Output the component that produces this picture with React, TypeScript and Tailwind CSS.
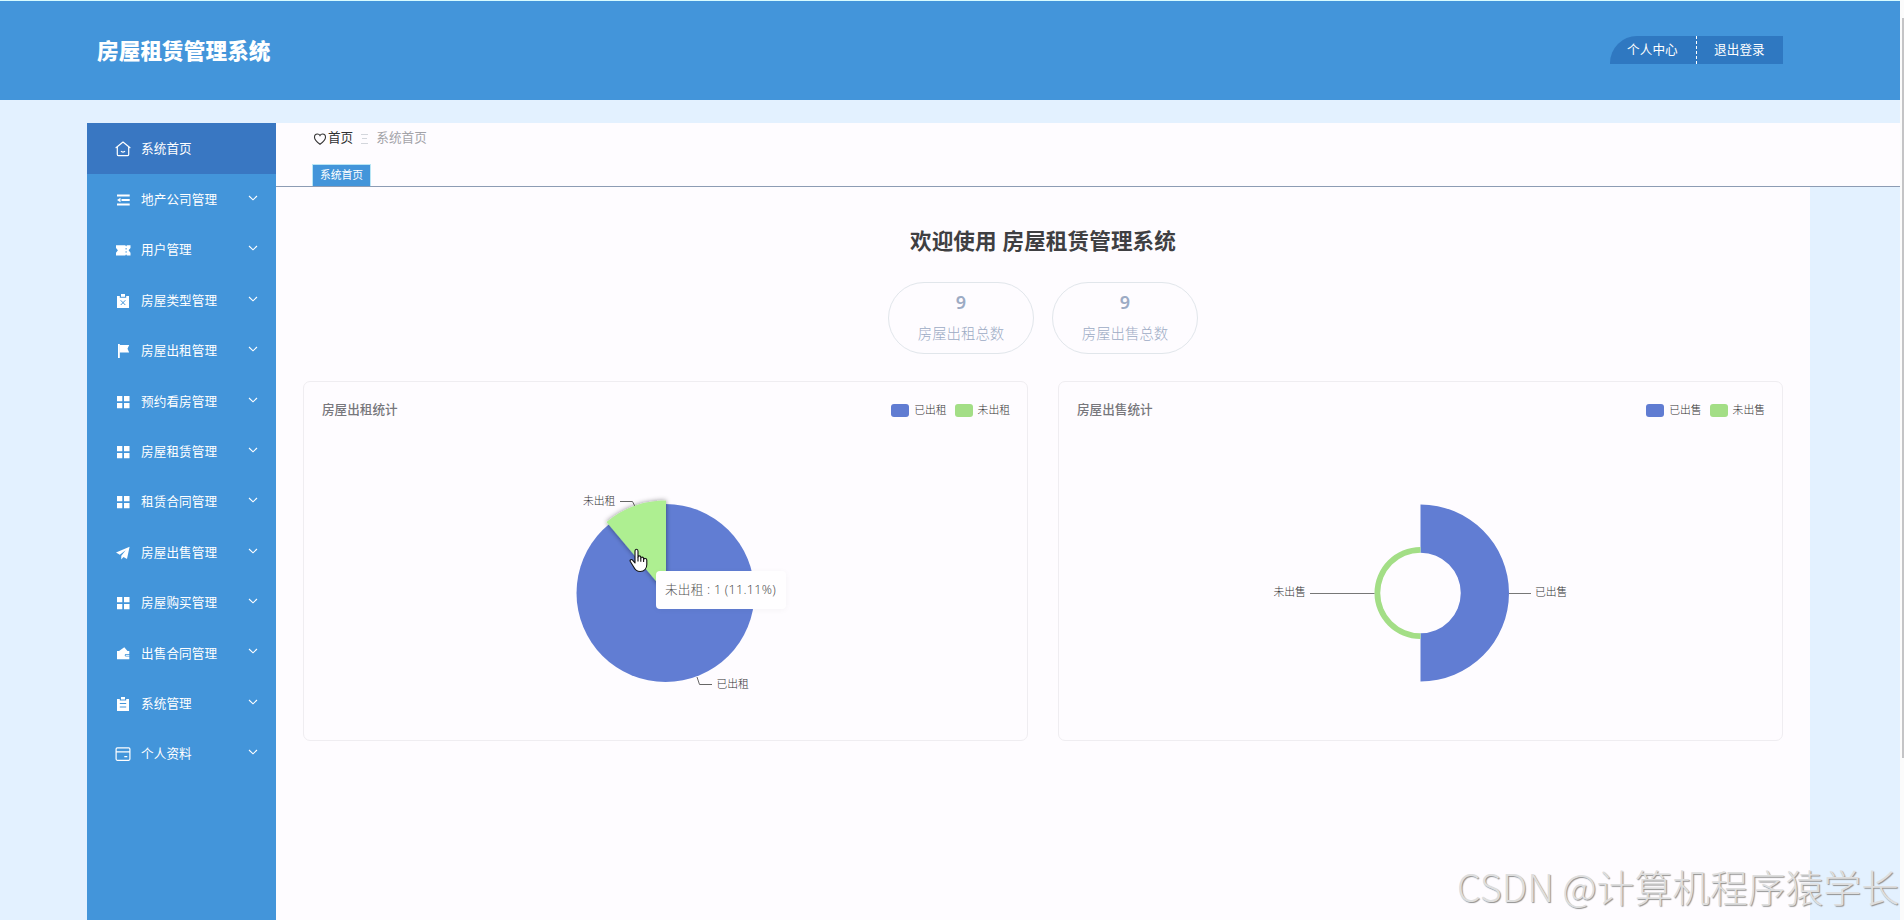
import React from "react";

type IconName =
  | "home" | "fold" | "ticket" | "claimX" | "flag" | "grid"
  | "plane" | "wallet" | "order" | "card";

function Icon({ name }: { name: IconName }) {
  const common = { width: 16, height: 16, viewBox: "0 0 16 16", className: "block shrink-0" };
  switch (name) {
    case "home":
      return (
        <svg {...common} fill="none" stroke="#fff" strokeWidth="1.2" strokeLinejoin="round">
          <path d="M1 6.7 8 1l7 5.7" strokeLinecap="round" />
          <path d="M2.3 6v7.6c0 .6.4 1 1 1h9.4c.6 0 1-.4 1-1V6" />
          <path d="M6 10.2c.9 1.1 3.1 1.1 4 0" />
        </svg>
      );
    case "fold":
      return (
        <svg {...common} fill="#fff">
          <path d="M2 2.500h12.700v2H2zM6.500 7h8.200v2H6.500zM2 11.500h12.700v2H2zM2 8l3.500-2.200v4.400z" />
        </svg>
      );
    case "ticket":
      return (
        <svg {...common} fill="#fff">
          <path d="M1 3.300h9.300l.8 1.300.8-1.300H15.500v2.800L13.600 8.300l1.900 2.400v2.800H11.900l-.8-1.300-.8 1.300H1v-2.800L2.900 8.300 1 6.100z" />
          <path d="M11.100 6v1.500M11.100 9.200v1.500" stroke="#4395da" strokeWidth="1" />
        </svg>
      );
    case "claimX":
      return (
        <svg {...common} fill="#fff">
          <path d="M2 3h2.8v1.800h6.4V3H14v12H2z" />
          <path d="M6 1h4v2.8H6z" />
          <path d="m5.7 7.3 4.6 4.7M10.3 7.3 5.7 12" stroke="#4395da" strokeWidth="1" />
        </svg>
      );
    case "flag":
      return (
        <svg {...common} fill="#fff">
          <path d="M3 1h1.8v14H3z" />
          <path d="M4.5 2h9.7l-1.7 3.8 1.7 3.7H4.5z" />
        </svg>
      );
    case "grid":
      return (
        <svg {...common} fill="#fff">
          <path d="M2 2h5.300v5.200H2zM9 2h5.500v5.200H9zM2 9h5.300v5.200H2zM9 9h5.500v5.200H9z" />
        </svg>
      );
    case "plane":
      return (
        <svg {...common} fill="#fff">
          <path d="M14.6 1.8 1 7.5l3.8 2.3 5.9-4.6-4.4 5.5-.1 3.8 2.3-2.5 3.5 2z" />
        </svg>
      );
    case "wallet":
      return (
        <svg {...common} fill="#fff">
          <path d="M2 6h2l5.3-3.8L12.5 6H14.3v3H11a1.3 1.3 0 0 0 0 2.6h3.3v2.6H2z" />
          <path d="M10.7 9.8h3.6v1h-3.6z" />
        </svg>
      );
    case "order":
      return (
        <svg {...common} fill="#fff">
          <path d="M2 3h2.8v1.5h6.4V3H14v12H2z" />
          <path d="M6 1h4v2.5H6z" />
          <path d="M4.8 7.5h6.4M4.8 11h6.4" stroke="#4395da" strokeWidth="1" />
        </svg>
      );
    case "card":
      return (
        <svg {...common} fill="none" stroke="#fff" strokeWidth="1.2">
          <rect x="1.1" y="1.9" width="13.8" height="12.4" rx="1.2" />
          <path d="M1 5.8h14M9.3 10.7h3" />
        </svg>
      );
  }
}

const menu: { label: string; icon: IconName }[] = [
  { label: "地产公司管理", icon: "fold" },
  { label: "用户管理", icon: "ticket" },
  { label: "房屋类型管理", icon: "claimX" },
  { label: "房屋出租管理", icon: "flag" },
  { label: "预约看房管理", icon: "grid" },
  { label: "房屋租赁管理", icon: "grid" },
  { label: "租赁合同管理", icon: "grid" },
  { label: "房屋出售管理", icon: "plane" },
  { label: "房屋购买管理", icon: "grid" },
  { label: "出售合同管理", icon: "wallet" },
  { label: "系统管理", icon: "order" },
  { label: "个人资料", icon: "card" },
];

function Header() {
  return (
    <header className="flex h-[100px] shrink-0 items-start justify-between border-t border-[#d6fbff] bg-[#4395da] pl-[97px] pr-[117px]">
      <h1 className="mt-[34px] text-[21.6px] font-black leading-[32px] tracking-[0.1px] text-white">房屋租赁管理系统</h1>
      <nav className="mt-[35px] flex h-7 text-[12.6px] leading-7 tracking-[0.1px] text-white">
        <a className="w-[87px] rounded-tl-[27px] border-r border-dashed border-white bg-[#2f78c1] pl-[17px]">个人中心</a>
        <a className="w-[86px] bg-[#2f78c1] pl-[17px]">退出登录</a>
      </nav>
    </header>
  );
}

function Sidebar() {
  return (
    <aside className="h-full w-[189px] shrink-0 bg-[#4395da] text-[12.6px] text-white">
      <div className="flex h-[51px] items-center gap-[10px] bg-[#3977c2] pl-7">
        <Icon name="home" />
        <span className="pt-px tracking-[0.1px]">系统首页</span>
      </div>
      {menu.map((m) => (
        <div key={m.label} className="flex h-[50.4px] items-center pl-7 pr-[18px] pt-[1.5px]">
          <Icon name={m.icon} />
          <span className="ml-[10px] flex-1 pt-px tracking-[0.1px]">{m.label}</span>
          <svg width="10" height="6" viewBox="0 0 10 6" className="mb-1 block" fill="none" stroke="#fff" strokeWidth="1.1">
            <path d="M1 1l4 3.8L9 1" />
          </svg>
        </div>
      ))}
    </aside>
  );
}

function Crumbs() {
  return (
    <div className="flex h-16 shrink-0 flex-col justify-between border-b border-[#8d9cb4] bg-[#fefcff] pl-[37px]">
      <div className="flex h-[31px] items-center text-[12.6px]">
        <svg width="14" height="12" viewBox="0 0 14 12" className="mr-px block" fill="none" stroke="#333" strokeWidth="1.1">
          <path d="M7 11.2C4.300 9.200 1.500 7 1.500 4.200 1.500 2.300 2.800 1 4.400 1 5.500 1 6.500 1.600 7 2.500 7.500 1.600 8.500 1 9.600 1c1.600 0 2.900 1.300 2.900 3.200 0 2.800-2.800 5-5.500 7z" />
        </svg>
        <span className="text-[#303133]">首页</span>
        <svg width="7" height="12" viewBox="0 0 7 12" className="ml-2 mr-2 block" stroke="#d3d6dc" strokeWidth="1">
          <path d="M0 1.500h7M1 5.500h5M0 10.500h7" />
        </svg>
        <span className="tracking-[0.1px] text-[#a3a3a8]">系统首页</span>
      </div>
      <div className="-ml-px h-[22px] w-[59px] border border-b-0 border-[#b9e6f5] bg-[#4395da] text-center text-[10.8px] leading-5 text-white">
        系统首页
      </div>
    </div>
  );
}

function Stat({ value, label }: { value: string; label: string }) {
  return (
    <div className="flex h-[72px] w-[146px] flex-col items-center rounded-[36px] border border-[#e1e6eb] pl-px text-[#9cabc4]">
      <div className="mt-[6px] text-[18px] font-semibold leading-[26px]">{value}</div>
      <div className="mt-[7px] text-[14.4px] font-light leading-[24px]">{label}</div>
    </div>
  );
}

function ChartCard({ title, legend, children }: { title: string; legend: [string, string]; children: React.ReactNode }) {
  return (
    <section className="relative h-[360px] w-[725px] rounded-[7px] border border-[#efedf1]">
      <div className="flex h-14 items-center justify-between pl-[18px] pr-[17px]">
        <h3 className="text-[12.6px] font-medium text-[#77777c]">{title}</h3>
        <div className="flex items-center gap-2 text-[10.8px] font-light text-[#333]">
          <span className="flex items-center gap-[5px]">
            <i className="h-[13px] w-[18px] rounded-[3px] bg-[#607cd2]" />
            {legend[0]}
          </span>
          <span className="flex items-center gap-[5px]">
            <i className="h-[13px] w-[18px] rounded-[3px] bg-[#a3de86]" />
            {legend[1]}
          </span>
        </div>
      </div>
      {children}
    </section>
  );
}

const chartText = "fill-[#333] text-[10.8px] font-light";

function RentPie() {
  return (
    <>
      <svg width="723" height="302" viewBox="304 438 723 302" className="block">
        <defs>
          <filter id="glow" x="-30%" y="-30%" width="160%" height="160%">
            <feDropShadow dx="0" dy="0" stdDeviation="2.5" floodColor="#000" floodOpacity="0.45" />
          </filter>
        </defs>
        <circle cx="665.500" cy="593" r="89" fill="#617dd3" />
        <path d="M620 501.500h12.500l2.500 5M697 677l2.500 7.500H712" fill="none" stroke="#666" strokeWidth="1" />
        <path d="M666 593V500.500A92.500 92.500 0 0 0 606.500 522.100Z" fill="#aeef91" filter="url(#glow)" />
        <text x="583" y="504.500" className={chartText}>未出租</text>
        <text x="716.500" y="688" className={chartText}>已出租</text>
      </svg>
      <div className="absolute left-[352px] top-[189px] h-[38px] w-[130px] rounded-[4px] bg-[#fffeff] pl-[9px] text-[12.6px] font-light leading-[38px] tracking-[0.25px] text-[#555] shadow-[0_1px_6px_rgba(0,0,0,0.04)]">
        未出租 : 1 (11.11%)
      </div>
      <svg width="20" height="26" viewBox="0 0 20 26" className="absolute left-[325px] top-[166px]" fill="#fff" stroke="#111" strokeWidth="1.1" strokeLinejoin="round">
        <path d="M6 15V3.200C6 .600 9 .600 9 3.200V9.500C9 7.300 11.800 7.300 11.800 9.500v1C11.800 8.600 14.600 8.600 14.600 10.700v1C14.600 9.900 17.800 10 17.800 12v4.500c0 4-2.500 7-6.500 7-3.500 0-5.300-1.600-6.600-4.500L1.300 13.500C.500 11.700 2.500 10.800 3.800 12.300z" />
        <path d="M9 9.500v4M11.800 10.500v3.300M14.600 11.500v2.500" fill="none" />
      </svg>
    </>
  );
}

function SaleRose() {
  return (
    <svg width="723" height="302" viewBox="1059 438 723 302" className="block">
      <path d="M1420.500 504.500a88.500 88.500 0 0 1 0 177v-48.200a40.300 40.300 0 0 0 0-80.600z" fill="#617dd3" />
      <path d="M1420.500 547a46 46 0 0 0 0 92v-5.700a40.300 40.300 0 0 1 0-80.600z" fill="#a3de86" />
      <path d="M1310 593.500h64.500M1509 593.500h22" stroke="#777" strokeWidth="1" />
      <text x="1273.500" y="596" className={chartText}>未出售</text>
      <text x="1535" y="596" className={chartText}>已出售</text>
    </svg>
  );
}

export default function App() {
  return (
    <div className="relative flex h-[920px] w-[1904px] overflow-hidden bg-[#e3f1ff] font-['Noto_Sans','Noto_Sans_CJK_SC',sans-serif]">
      <div className="flex w-[1900px] flex-col">
        <Header />
        <div className="mt-[23px] flex min-h-0 flex-1 pl-[87px]">
          <Sidebar />
          <div className="flex flex-1 flex-col">
            <Crumbs />
            <main className="flex w-[1534px] flex-1 flex-col bg-[#fefcff] pl-[27px] pr-[27px]">
              <h2 className="mt-[38px] text-center text-[21.6px] font-bold leading-8 tracking-[0.1px] text-[#3f3f42]">
                欢迎使用 房屋租赁管理系统
              </h2>
              <div className="mt-[25px] flex justify-center gap-[18px] pr-px">
                <Stat value="9" label="房屋出租总数" />
                <Stat value="9" label="房屋出售总数" />
              </div>
              <div className="mt-[27px] flex justify-between">
                <ChartCard title="房屋出租统计" legend={["已出租", "未出租"]}>
                  <RentPie />
                </ChartCard>
                <ChartCard title="房屋出售统计" legend={["已出售", "未出售"]}>
                  <SaleRose />
                </ChartCard>
              </div>
            </main>
          </div>
        </div>
      </div>
      <div className="flex w-1 justify-end bg-[#fbfbfb] pt-[18px]">
        <div className="h-[740px] w-0.5 bg-[#c4c4c6]" />
      </div>
      <div className="absolute bottom-[6px] right-[5px] whitespace-nowrap font-['Noto_Sans_CJK_SC',sans-serif] text-[37.8px] font-light leading-[56px] text-[#dedede] [text-shadow:1px_1px_1px_#909090]">
        CSDN @计算机程序猿学长
      </div>
    </div>
  );
}
